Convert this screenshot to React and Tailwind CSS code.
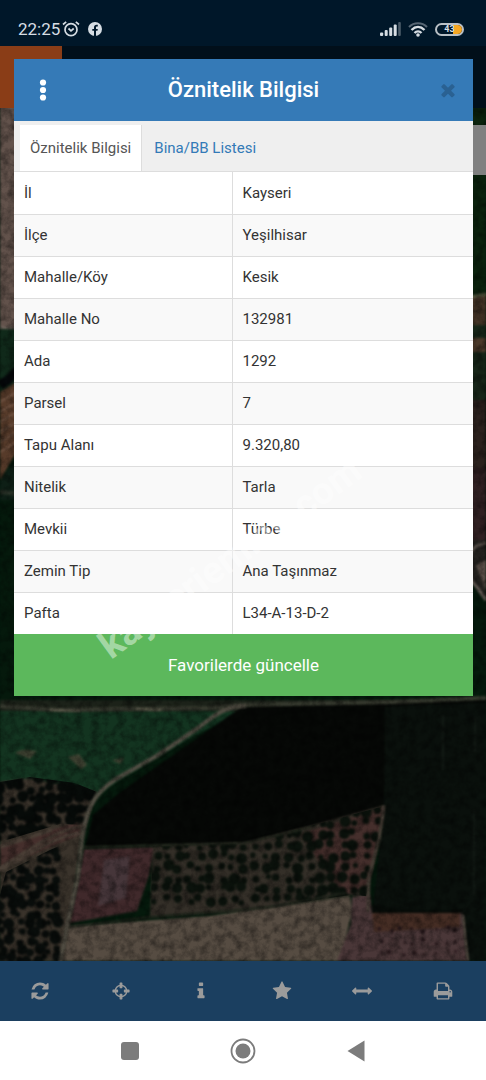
import React from 'react';

const ATTRIBUTES = [
  ['İl', 'Kayseri'],
  ['İlçe', 'Yeşilhisar'],
  ['Mahalle/Köy', 'Kesik'],
  ['Mahalle No', '132981'],
  ['Ada', '1292'],
  ['Parsel', '7'],
  ['Tapu Alanı', '9.320,80'],
  ['Nitelik', 'Tarla'],
  ['Mevkii', 'Türbe'],
  ['Zemin Tip', 'Ana Taşınmaz'],
  ['Pafta', 'L34-A-13-D-2'],
];

const CLOSE_PATH =
  'M1490 1322q0 40-28 68l-136 136q-28 28-68 28t-68-28l-294-294-294 294q-28 28-68 28t-68-28l-136-136q-28-28-28-68t28-68l294-294-294-294q-28-28-28-68t28-68l136-136q28-28 68-28t68 28l294 294 294-294q28-28 68-28t68 28l136 136q28 28 28 68t-28 68l-294 294 294 294q28 28 28 68z';

const TOOLS = [
  {
    label: 'Yenile',
    path: 'M1639 1056q0 5-1 7-64 268-268 434.500t-478 166.500q-146 0-282.500-55t-243.500-157l-129 129q-19 19-45 19t-45-19-19-45v-448q0-26 19-45t45-19h448q26 0 45 19t19 45-19 45l-137 137q71 66 161 102t187 36q134 0 250-65t186-179q11-17 53-117 8-23 30-23h192q13 0 22.500 9.500t9.500 22.500zm25-800v448q0 26-19 45t-45 19h-448q-26 0-45-19t-19-45 19-45l138-138q-148-137-349-137-134 0-250 65t-186 179q-11 17-53 117-8 23-30 23h-199q-13 0-22.500-9.500t-9.500-22.500v-7q65-268 270-434.500t480-166.500q146 0 284 55.500t245 156.500l130-129q19-19 45-19t45 19 19 45z',
  },
  {
    label: 'Konum',
    path: 'M1325 1024h-109q-26 0-45-19t-19-45v-128q0-26 19-45t45-19h109q-32-108-112.500-188.500t-188.500-112.500v109q0 26-19 45t-45 19h-128q-26 0-45-19t-19-45v-109q-108 32-188.500 112.500t-112.500 188.500h109q26 0 45 19t19 45v128q0 26-19 45t-45 19h-109q32 108 112.500 188.500t188.500 112.500v-109q0-26 19-45t45-19h128q26 0 45 19t19 45v109q108-32 188.500-112.500t112.500-188.500zm339-192v128q0 26-19 45t-45 19h-143q-37 161-154.500 278.500t-278.500 154.500v143q0 26-19 45t-45 19h-128q-26 0-45-19t-19-45v-143q-161-37-278.500-154.500t-154.500-278.500h-143q-26 0-45-19t-19-45v-128q0-26 19-45t45-19h143q37-161 154.500-278.500t278.500-154.500v-143q0-26 19-45t45-19h128q26 0 45 19t19 45v143q161 37 278.500 154.500t154.500 278.500h143q26 0 45 19t19 45z',
  },
  {
    label: 'Bilgi',
    path: 'M1216 1344v128q0 26-19 45t-45 19h-512q-26 0-45-19t-19-45v-128q0-26 19-45t45-19h64v-384h-64q-26 0-45-19t-19-45v-128q0-26 19-45t45-19h384q26 0 45 19t19 45v576h64q26 0 45 19t19 45zm-128-1152v192q0 26-19 45t-45 19h-256q-26 0-45-19t-19-45v-192q0-26 19-45t45-19h256q26 0 45 19t19 45z',
  },
  {
    label: 'Favoriler',
    path: 'M1728 647q0 22-26 48l-363 354 86 500q1 7 1 20 0 21-10.500 35.500t-30.500 14.500q-19 0-40-12l-449-236-449 236q-22 12-40 12-21 0-31.500-14.500t-10.500-35.500q0-6 2-20l86-500-364-354q-25-27-25-48 0-37 56-46l502-73 225-455q19-41 49-41t49 41l225 455 502 73q56 9 56 46z',
  },
  {
    label: 'Ölçüm',
    path: 'M1792 896q0 26-19 45l-256 256q-19 19-45 19t-45-19-19-45v-128h-1024v128q0 26-19 45t-45 19-45-19l-256-256q-19-19-19-45t19-45l256-256q19-19 45-19t45 19 19 45v128h1024v-128q0-26 19-45t45-19 45 19l256 256q19 19 19 45z',
  },
  {
    label: 'Yazdır',
    path: 'M448 1536h896v-256h-896v256zm0-640h896v-384h-160q-40 0-68-28t-28-68v-160h-640v640zm1152 64q0-26-19-45t-45-19-45 19-19 45 19 45 45 19 45-19 19-45zm128 0v416q0 13-9.500 22.500t-22.500 9.500h-224v160q0 40-28 68t-68 28h-960q-40 0-68-28t-28-68v-160h-224q-13 0-22.500-9.500t-9.500-22.500v-416q0-79 56.500-135.500t135.500-56.500h64v-544q0-40 28-68t68-28h672q40 0 88 20t76 48l152 152q28 28 48 76t20 88v256h64q79 0 135.500 56.500t56.500 135.500z',
  },
];

const ORCHARDS = [
  { id: 'west', points: '0,782 30,777 75,783 97,792 86,825 60,824 0,842', box: [0, 778, 98, 842], step: 10, r: 6, color: '#070b09' },
  { id: 'south', points: '6,872 50,850 78,838 70,900 60,961 0,961 0,895', box: [2, 842, 58, 961], step: 9, r: 5, color: '#090d0b' },
  { id: 'middle', points: '153,846 245,843 310,826 384,806 372,872 366,896 350,895 240,911 150,916', box: [156, 812, 384, 908], step: 11, r: 5, color: '#0b120c' },
  { id: 'east', points: '372,915 460,915 463,961 370,961', box: [380, 930, 462, 961], step: 11, r: 2, color: '#241619' },
];

// deterministic noise, so the trees stay put between renders
const noise = (n) => {
  const value = Math.sin(n * 127.1 + 11.7) * 43758.5453;
  return value - Math.floor(value);
};

const plantTrees = ({ box: [x1, y1, x2, y2], step, r }) => {
  const trees = [];
  let n = x1 + y1;
  for (let y = y1; y <= y2; y += step) {
    for (let x = x1; x <= x2; x += step) {
      n += 3;
      trees.push({
        x: x + (noise(n) - 0.5) * 6,
        y: y + (noise(n + 1) - 0.5) * 6,
        r: r * (0.5 + noise(n + 2) * 0.7),
      });
    }
  }
  return trees;
};

function SatelliteMap() {
  return (
    <svg
      className="absolute inset-0 h-full w-full"
      viewBox="0 46 486 915"
      preserveAspectRatio="xMidYMax slice"
      aria-hidden="true"
    >
      <defs>
        <filter id="grain" x="0" y="0" width="100%" height="100%" colorInterpolationFilters="sRGB">
          <feTurbulence type="fractalNoise" baseFrequency="0.12" numOctaves="4" seed="4" />
          <feColorMatrix values="0 0 0 0 0  0 0 0 0 0  0 0 0 0 0  1.8 0 0 0 -0.65" />
        </filter>
        <filter id="soft" colorInterpolationFilters="sRGB">
          <feGaussianBlur stdDeviation="0.8" />
        </filter>
        {ORCHARDS.map((o) => (
          <clipPath key={o.id} id={`orchard-${o.id}`}>
            <polygon points={o.points} />
          </clipPath>
        ))}
      </defs>
      <g filter="url(#soft)">
        <rect y="46" width="486" height="915" fill="#05190c" />
        {/* land seen at both sides of the dialog */}
        <rect y="100" width="20" height="228" fill="#62524b" />
        <rect y="326" width="20" height="3" fill="#6b6058" />
        <rect y="329" width="20" height="70" fill="#10291a" />
        <path d="M0 392l20-12v66L0 480z" fill="#573b2a" />
        <path d="M0 402l20-12M0 412l20-12M0 422l20-12M0 432l20-12M0 442l20-12M0 452l20-12" stroke="#705545" strokeWidth="2" />
        <path d="M0 385l9-6 9-9" stroke="#05080a" strokeWidth="9" fill="none" />
        <path d="M0 482c6-12 12-18 20-18v36H0z" fill="#0e1f16" />
        <path d="M0 492l20 2" stroke="#2b3329" strokeWidth="4" />
        <rect x="470" y="100" width="16" height="195" fill="#0b220d" />
        <path d="M470 298l16-3v58l-16 10z" fill="#443426" />
        <path d="M470 297l16-3" stroke="#53583f" strokeWidth="3" />
        <rect x="470" y="325" width="16" height="90" fill="#172518" />
        <rect x="470" y="338" width="16" height="14" fill="#4a3829" />
        <rect x="470" y="400" width="16" height="80" fill="#2b211d" />
        <rect x="470" y="468" width="16" height="72" fill="#302022" />
        <path d="M470 540h16v60l-16-20z" fill="#24221f" />
        <path d="M470 551l7-5 9-3M470 578l16 22" stroke="#615852" strokeWidth="3" fill="none" />
        <path d="M476 565l10-5v30z" fill="#5a4f48" />

        {/* fields */}
        <path d="M0 700h486v12H0z" fill="#1c2219" />
        <path d="M0 711h240L160 755 110 786 96 796 40 780 0 782z" fill="#17362a" />
        <path d="M0 711h240L160 755 110 786 96 796 40 780 0 782z" fill="#12331c" opacity="0.7" />
        <path d="M15 753c8-6 18-2 22-2l-7 8zM68 757l11-3 8 11-6 4zM112 760l12-2-4 6z" fill="#414534" />
        <path d="M243 706l243-7v220H372l12-114-72 23-67 15-160 4 8-32 26-22 50-35z" fill="#060806" />
        <path d="M385 706l101-4v259h-20l-5-42h-89l12-114z" fill="#0a100c" />
        <path d="M443 715v54M475 717v35M474 810v85" stroke="#1b251d" strokeWidth="1" />
        <path d="M0 782l30-4 67 14-16 46-16 123H0z" fill="#3a332b" />
        <path d="M0 846l78-24 3 12-81 34z" fill="#452f2c" />
        <path d="M84 849l70-2-5 28-12 36-67 12z" fill="#40292b" />
        <path d="M104 860l26-4-4 42-28 8z" fill="#46363a" />
        <path d="M153 846l92-3 65-17 75-21-13 67-6 25-16-2-110 16-90 6z" fill="#342f28" />
        <path d="M300 834l84-27-12 65-8 18-22 5z" fill="#452f2c" />
        <path d="M69 926l140-10 141-20 2 16-12 49H64z" fill="#564c42" />
        <path d="M352 897l18-2 2 18 90-1 5 49H337l14-37z" fill="#4a3738" />
        <path d="M372 912l88 1v14l-86 5z" fill="#452d24" />
        <path d="M372 905c22 3 58 9 90 4v4h-90z" fill="#070b08" />
      </g>

      {ORCHARDS.map((orchard) => (
        <g key={orchard.id} clipPath={`url(#orchard-${orchard.id})`}>
          <g filter="url(#soft)" fill={orchard.color}>
            {plantTrees(orchard).map((tree, i) => (
              <circle key={i} cx={tree.x} cy={tree.y} r={tree.r} />
            ))}
          </g>
        </g>
      ))}

      {/* roads */}
      <g filter="url(#soft)" fill="none">
        <path d="M0 706l60 4 60-1 90-1 33-3 150-3 93-4" stroke="#373a2f" strokeWidth="4" />
        <path d="M50 710l30 1M136 709l25 1" stroke="#626050" strokeWidth="2" />
        <path d="M246 706c-22 0-32 10-48 22l-40 27-42 24c-28 18-30 38-34 60l-4 38-10 44-8 44" stroke="#514d43" strokeWidth="4" />
        <path d="M84 826c-24 2-52 22-86 43M82 833C60 834 36 850-2 872M0 847l52-17" stroke="#4a4037" strokeWidth="3" />
        <path d="M84 847l161-4 66-16" stroke="#25291f" strokeWidth="2" />
        <path d="M384 806l-5 34-10 36-1 36" stroke="#463e36" strokeWidth="3" />
        <path d="M69 927l81-10 120-10 76-14" stroke="#1f241b" strokeWidth="2" />
        <path d="M463 915l5 46" stroke="#5b5147" strokeWidth="2" />
      </g>
      <rect y="46" width="486" height="915" filter="url(#grain)" opacity="0.45" />
    </svg>
  );
}

function StatusBar() {
  return (
    <header className="flex h-[46px] items-center justify-between bg-[#001729] px-[18px] pt-3 text-[#d6dde3]">
      <div className="flex items-center">
        <span className="text-[17px] leading-5">22:25</span>
        <svg className="ml-[2px] h-4 w-[18px]" viewBox="0 0 18 16" fill="none" stroke="currentColor" strokeWidth="1.7">
          <circle cx="9" cy="8.700" r="6" />
          <path d="M6.500 7.500L9 9.800l2.700-2.300M1 3.500L4.200.900M17 3.500L13.800.900" />
        </svg>
        <svg className="ml-2 h-[14px] w-[14px]" viewBox="0 0 14 14">
          <circle cx="7" cy="7" r="7" fill="currentColor" />
          <path d="M6 14V8.800H4.300V6.900H6V5.400C6 3.700 7 2.800 8.500 2.800h1.300v1.700H9c-.7 0-1 .4-1 1v1.400h1.800l-.3 1.900H8V14z" fill="#001729" />
        </svg>
      </div>
      <div className="flex items-center gap-[7px] pr-1">
        <svg className="h-[14px] w-[21px]" viewBox="0 0 21 14" fill="currentColor">
          <rect y="10.500" width="3.200" height="3.500" rx="1" />
          <rect x="4.700" y="8" width="3" height="6" rx="1" />
          <rect x="9.200" y="5.500" width="3" height="8.500" rx="1" />
          <rect x="13.700" y="2.500" width="3" height="11.500" rx="1" />
          <rect x="18.200" width="2.600" height="14" rx="1" opacity="0.35" />
        </svg>
        <svg className="h-[15px] w-5" viewBox="0 0 20 15" fill="none" stroke="currentColor" strokeWidth="2">
          <path d="M1 5c5-5 13-5 18 0" opacity="0.4" />
          <path d="M3.500 8c4-4 9-4 13 0M6.500 11c2-2 5-2 7 0" strokeWidth="2.400" />
          <circle cx="10" cy="13" r="1.800" fill="currentColor" stroke="none" />
        </svg>
        <div className="relative flex h-[13px] w-[29px] items-center justify-center overflow-hidden rounded-full border-2 border-[#b9c0c6] text-[9px] leading-none font-bold">
          <span className="absolute right-0 h-full w-[9px] bg-[#f5a623]" />
          <span className="relative">43</span>
        </div>
      </div>
    </header>
  );
}

function AttributeDialog() {
  return (
    <section role="dialog" aria-labelledby="dialog-title" className="relative bg-white">
      <div className="grid h-[62px] grid-cols-[58px_1fr_58px] items-center bg-[#357ab7] text-white">
        <button type="button" aria-label="Menü" className="flex justify-center">
          <svg className="h-[22px] w-2" viewBox="0 0 8 22" fill="currentColor">
            <circle cx="4" cy="3.500" r="3.100" />
            <circle cx="4" cy="11" r="3.100" />
            <circle cx="4" cy="18.500" r="3.100" />
          </svg>
        </button>
        <h1 id="dialog-title" className="text-center text-[22px] leading-7 font-medium">
          Öznitelik Bilgisi
        </h1>
        <button type="button" aria-label="Kapat" className="flex justify-center pl-2 text-[#2a6192]">
          <svg className="h-5 w-5" viewBox="0 0 1792 1792" fill="currentColor">
            <path d={CLOSE_PATH} />
          </svg>
        </button>
      </div>

      <div role="tablist" className="flex h-[51px] items-end border-b border-[#dddddd] bg-[#efefef] px-[6px] text-[15px] leading-5">
        <button type="button" role="tab" aria-selected="true" className="h-[46px] border-r border-[#dddddd] bg-white px-[10px] text-[#555555]">
          Öznitelik Bilgisi
        </button>
        <button type="button" role="tab" aria-selected="false" className="h-[46px] px-3 text-[#337ab7]">
          Bina/BB Listesi
        </button>
      </div>

      <table className="w-full table-fixed border-collapse text-[15px] leading-5 text-[#333333]">
        <tbody>
          {ATTRIBUTES.map(([name, value]) => (
            <tr key={name} className="h-[42px] border-b border-[#dddddd] last:border-b-0 even:bg-[#f9f9f9]">
              <th scope="row" className="w-[218px] border-r border-[#dddddd] px-[10px] text-left font-normal">
                {name}
              </th>
              <td className="px-[10px]">{value}</td>
            </tr>
          ))}
        </tbody>
      </table>

      <button type="button" className="h-[62px] w-full bg-[#5cb85c] text-[17px] leading-6 text-white">
        Favorilerde güncelle
      </button>

      <span className="pointer-events-none absolute bottom-8 left-[100px] origin-bottom-left -rotate-36 text-[38px] leading-9 font-bold whitespace-nowrap text-white/45">
        kayseriemlak.com
      </span>
    </section>
  );
}

export default function App() {
  return (
    <div className="flex min-h-screen flex-col font-[Roboto,sans-serif]">
      <StatusBar />

      <main className="relative flex-1 overflow-hidden bg-[#05190c]">
        <SatelliteMap />
        <div className="absolute inset-x-0 top-0 h-[62px] bg-[#010f1a]">
          <div className="h-full w-[62px] bg-[#8a3d17]" />
        </div>
        <div className="absolute top-[79px] right-0 h-[50px] w-10 bg-[#808080]" />
        <div className="relative pt-[13px] pr-[13px] pl-[14px]">
          <AttributeDialog />
        </div>
      </main>

      <nav className="grid h-[60px] grid-cols-6 bg-[#1b3f60] pr-[3px] text-[#9b9b9b]">
        {TOOLS.map((tool) => (
          <button key={tool.label} type="button" aria-label={tool.label} className="flex items-center justify-center">
            <svg className="h-5 w-5" viewBox="0 0 1792 1792" fill="currentColor">
              <path d={tool.path} />
            </svg>
          </button>
        ))}
      </nav>

      <footer className="grid h-[59px] grid-cols-3 items-center justify-items-center bg-white px-[73px] text-[#7c7c7c]">
        <button type="button" aria-label="Son uygulamalar" className="h-[18px] w-[18px] rounded-[3px] bg-[#7c7c7c]" />
        <button type="button" aria-label="Ana ekran">
          <svg className="h-[26px] w-[26px]" viewBox="0 0 26 26">
            <circle cx="13" cy="13" r="11.500" fill="none" stroke="currentColor" strokeWidth="1.800" />
            <circle cx="13" cy="13" r="7.500" fill="currentColor" />
          </svg>
        </button>
        <button type="button" aria-label="Geri">
          <svg className="h-[22px] w-[18px]" viewBox="0 0 18 22" fill="currentColor">
            <path d="M17.500.5v21L.5 11z" />
          </svg>
        </button>
      </footer>
    </div>
  );
}
